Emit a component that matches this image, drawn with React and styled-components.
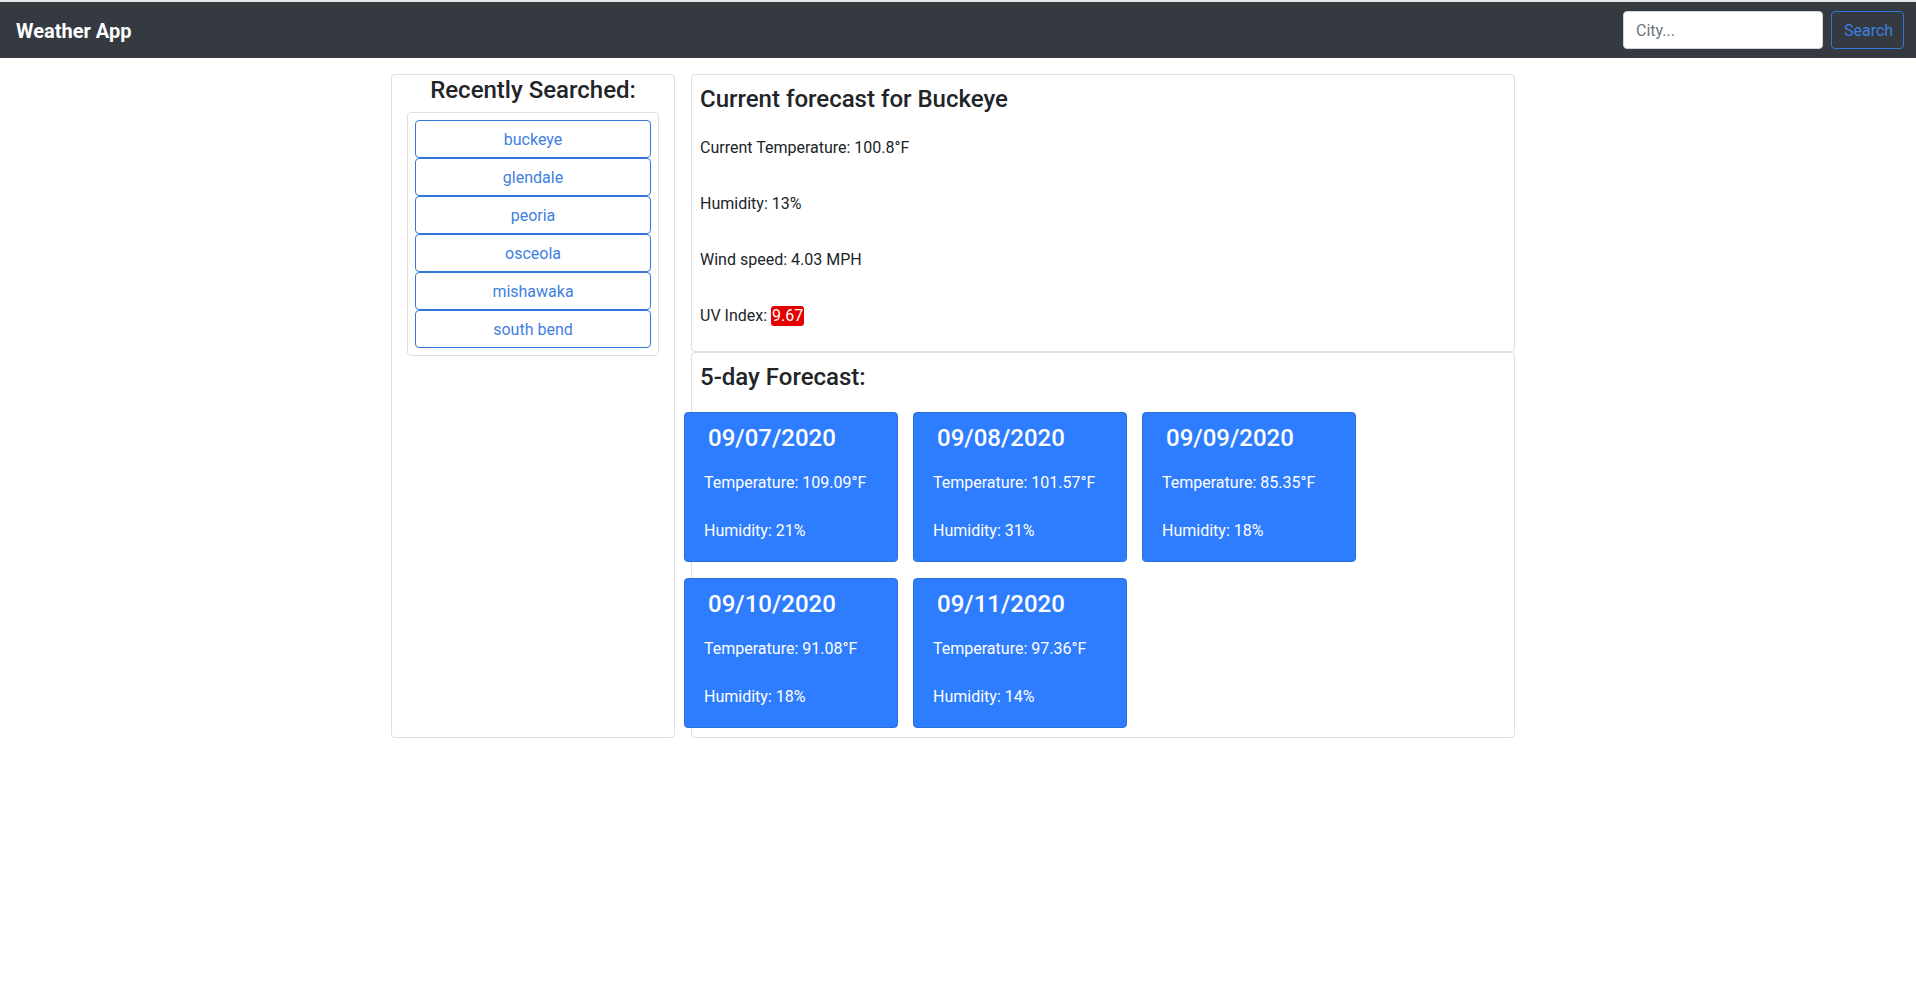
import React from "react";
import styled, { createGlobalStyle } from "styled-components";

const GlobalStyle = createGlobalStyle`
  html, body { margin: 0; padding: 0; background: #fff; }
  body {
    font-family: Roboto, "Liberation Sans", sans-serif;
    font-size: 16px;
    line-height: 1.5;
    color: #212529;
    border-top: 2px solid #e4e6e8;
  }
  * { box-sizing: border-box; }
`;

const Navbar = styled.nav`
  height: 56px;
  background: #343a40;
  display: flex;
  align-items: center;
  justify-content: space-between;
  padding: 0 12px 0 16px;
`;

const Brand = styled.a`
  color: #fff;
  font-size: 20px;
  font-weight: 700;
  text-decoration: none;
  padding-top: 1px;
`;

const SearchForm = styled.form`
  display: flex;
  align-items: center;
  gap: 8px;
`;

const CityInput = styled.input`
  width: 200px;
  height: 38px;
  border: 1px solid #ced4da;
  border-radius: 4px;
  padding: 6px 12px;
  font-family: inherit;
  font-size: 16px;
  color: #495057;
  background: #fff;
  &::placeholder { color: #6c757d; }
`;

const OutlineButton = styled.button`
  height: 38px;
  width: ${(p) => (p.$block ? "100%" : "73px")};
  display: block;
  background: ${(p) => (p.$block ? "#fff" : "transparent")};
  border: 1px solid #3278dc;
  border-radius: 4px;
  color: #3f7fe0;
  font-family: inherit;
  font-size: 16px;
  line-height: 1.5;
  padding: 7px 12px 5px;
  text-align: center;
  cursor: pointer;
`;

const Container = styled.main`
  max-width: 1140px;
  margin: 0 auto;
  padding: 16px 13px 0 3px;
  display: flex;
  gap: 16px;
  align-items: stretch;
`;

const Card = styled.section`
  border: 1px solid #dfdfdf;
  border-radius: 4px;
  background: #fff;
`;

const SideCard = styled(Card)`
  width: 284px;
  flex: none;
  padding: 0 15px;
`;

const SideTitle = styled.h3`
  margin: 0 0 7px;
  padding-top: 1px;
  font-size: 24px;
  font-weight: 500;
  line-height: 1.2;
  text-align: center;
`;

const HistoryList = styled(Card)`
  padding: 7px;
  display: flex;
  flex-direction: column;
`;

const MainCol = styled.div`
  width: 824px;
  flex: none;
  display: flex;
  flex-direction: column;
`;

const InfoCard = styled(Card)`
  padding: 8px;
  height: ${(p) => p.$h};
`;

const Heading = styled.h3`
  margin: 0 0 ${(p) => p.$mb || "24px"};
  padding-top: 2px;
  font-size: 24px;
  font-weight: 500;
  line-height: 1.2;
`;

const Stats = styled.div`
  display: flex;
  flex-direction: column;
  gap: ${(p) => p.$gap};
`;

const Stat = styled.p`
  margin: 0;
  padding-top: 1px;
  font-size: 16px;
  line-height: 24px;
`;

const UvBadge = styled.span`
  display: inline-block;
  background: #e60000;
  color: #fff;
  line-height: 20px;
  padding: 0 1px;
  border-radius: 3px;
`;

const ForecastGrid = styled.div`
  display: grid;
  grid-template-columns: repeat(3, 214px);
  column-gap: 15px;
  row-gap: 16px;
  margin-left: -16px;
`;

const DayCard = styled.div`
  height: 150px;
  background: #2e7dfe;
  border: 1px solid #2a6fd9;
  border-radius: 4px;
  color: #fff;
  padding: 7px 19px;
`;

const DayDate = styled.h3`
  margin: 0 0 17px 4px;
  padding-top: 4px;
  font-size: 24px;
  font-weight: 500;
  line-height: 1.2;
`;

const history = ["buckeye", "glendale", "peoria", "osceola", "mishawaka", "south bend"];

const forecast = [
  { date: "09/07/2020", temp: "109.09", hum: "21" },
  { date: "09/08/2020", temp: "101.57", hum: "31" },
  { date: "09/09/2020", temp: "85.35", hum: "18" },
  { date: "09/10/2020", temp: "91.08", hum: "18" },
  { date: "09/11/2020", temp: "97.36", hum: "14" },
];

export default function App() {
  return (
    <>
      <GlobalStyle />
      <Navbar>
        <Brand href="#">Weather App</Brand>
        <SearchForm onSubmit={(e) => e.preventDefault()}>
          <CityInput placeholder="City..." />
          <OutlineButton type="submit">Search</OutlineButton>
        </SearchForm>
      </Navbar>
      <Container>
        <SideCard>
          <SideTitle>Recently Searched:</SideTitle>
          <HistoryList>
            {history.map((c) => (
              <OutlineButton key={c} $block type="button">
                {c}
              </OutlineButton>
            ))}
          </HistoryList>
        </SideCard>
        <MainCol>
          <InfoCard $h="278px">
            <Heading $mb="21px">Current forecast for Buckeye</Heading>
            <Stats $gap="31px">
              <Stat>Current Temperature: 100.8°F</Stat>
              <Stat>Humidity: 13%</Stat>
              <Stat>Wind speed: 4.03 MPH</Stat>
              <Stat>
                UV Index: <UvBadge>9.67</UvBadge>
              </Stat>
            </Stats>
          </InfoCard>
          <InfoCard $h="386px">
            <Heading $mb="20px">5-day Forecast:</Heading>
            <ForecastGrid>
              {forecast.map((d) => (
                <DayCard key={d.date}>
                  <DayDate>{d.date}</DayDate>
                  <Stats $gap="23px">
                    <Stat>Temperature: {d.temp}°F</Stat>
                    <Stat>Humidity: {d.hum}%</Stat>
                  </Stats>
                </DayCard>
              ))}
            </ForecastGrid>
          </InfoCard>
        </MainCol>
      </Container>
    </>
  );
}
